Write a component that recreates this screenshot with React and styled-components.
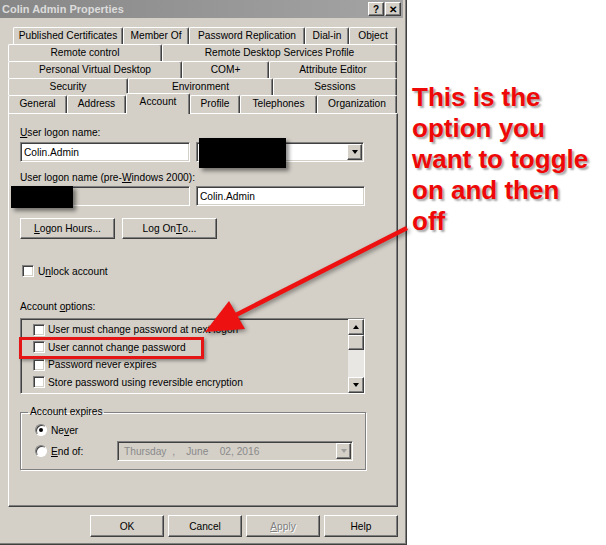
import React from "react";
import styled, { createGlobalStyle, css } from "styled-components";

const face = `"Liberation Sans", Arial, sans-serif`;

const GlobalStyle = createGlobalStyle`
  *, *::before, *::after { box-sizing: border-box; }
  html, body { margin: 0; padding: 0; background: #fff; }
  body { font-family: ${face}; }
`;

const raised = css`
  border: 1px solid;
  border-color: #fff #404040 #404040 #fff;
  box-shadow: inset -1px -1px #808080;
  background: #d4d0c8;
`;

const sunken = css`
  border: 1px solid;
  border-color: #808080 #fff #fff #808080;
  box-shadow: inset 1px 1px #404040, inset -1px -1px #d4d0c8;
`;

const tabs = [
  { indent: 5, h: 17, items: [["Published Certificates", 110], ["Member Of", 66], ["Password Replication", 116], ["Dial-in", 44], ["Object", 48]] },
  { indent: 0, h: 17, items: [["Remote control", 154], ["Remote Desktop Services Profile", 235]] },
  { indent: 0, h: 17, items: [["Personal Virtual Desktop", 174], ["COM+", 87], ["Attribute Editor", 128]] },
  { indent: 0, h: 17, items: [["Security", 120], ["Environment", 145], ["Sessions", 124]] },
  { indent: 0, h: 18, items: [["General", 59], ["Address", 59], ["Account", 64, true], ["Profile", 50], ["Telephones", 77], ["Organization", 80]] },
];

const options = [
  "User must change password at next logon",
  "User cannot change password",
  "Password never expires",
  "Store password using reversible encryption",
];

export default function App() {
  return (
    <Page>
      <GlobalStyle />
      <Dialog>
        <TitleBar>
          <Title>Colin Admin Properties</Title>
          <CaptionButtons>
            <CaptionButton>?</CaptionButton>
            <CaptionButton>✕</CaptionButton>
          </CaptionButtons>
        </TitleBar>

        <TabStrip>
          {tabs.map((row, i) => (
            <TabRow key={i} $indent={row.indent} $h={row.h}>
              {row.items.map(([name, w, active]) => (
                <Tab key={name} $w={w} $active={active}>{name}</Tab>
              ))}
            </TabRow>
          ))}
        </TabStrip>

        <Panel>
          <Label><U>U</U>ser logon name:</Label>
          <FieldRow $mt={3}>
            <Field $w={170}>Colin.Admin</Field>
            <Field $w={168} $combo>
              <Redact $x={2} $y={-5} $w={87} $h={30} />
              <DropButton><Arrow /></DropButton>
            </Field>
          </FieldRow>

          <Label $mt={10}>User logon name (pre-<U>W</U>indows 2000):</Label>
          <FieldRow $mt={2}>
            <Field $w={170} $disabled>
              <Redact $x={-10} $y={-1} $w={62} $h={22} />
            </Field>
            <Field $w={169}>Colin.Admin</Field>
          </FieldRow>

          <ButtonRow>
            <PushButton><U>L</U>ogon Hours...</PushButton>
            <PushButton>Log On <U>T</U>o...</PushButton>
          </ButtonRow>

          <CheckRow>
            <Check />
            <span>U<U>n</U>lock account</span>
          </CheckRow>

          <Label $mt={23}>Account <U>o</U>ptions:</Label>
          <ListBox>
            <ListItems>
              {options.map((o, i) => (
                <ListItem key={o}>
                  <Check />
                  <span>{o}</span>
                  {i === 1 && <Highlight />}
                </ListItem>
              ))}
            </ListItems>
            <ScrollBar>
              <ScrollButton><Arrow $up /></ScrollButton>
              <Thumb />
              <Track />
              <ScrollButton><Arrow /></ScrollButton>
            </ScrollBar>
          </ListBox>

          <Group>
            <Legend>Account expires</Legend>
            <RadioRow $mt={5}>
              <Radio $checked />
              <span>Ne<U>v</U>er</span>
            </RadioRow>
            <RadioRow $mt={4}>
              <Radio />
              <RadioLabel><U>E</U>nd of:</RadioLabel>
              <DatePicker>
                <span>{"Thursday  ,    June    02, 2016"}</span>
                <DropButton $disabled><Arrow $disabled /></DropButton>
              </DatePicker>
            </RadioRow>
          </Group>
        </Panel>

        <ButtonBar>
          <DlgButton>OK</DlgButton>
          <DlgButton>Cancel</DlgButton>
          <DlgButton $disabled><U>A</U>pply</DlgButton>
          <DlgButton>Help</DlgButton>
        </ButtonBar>
      </Dialog>

      <Note>
        This is the<br />
        option you<br />
        want to toggle<br />
        on and then<br />
        off
      </Note>

      <Pointer viewBox="0 0 606 545" width="606" height="545">
        <line x1="407" y1="228" x2="232" y2="317" stroke="#ee1111" strokeWidth="4.5" />
        <polygon points="205,332 245,329 229,301" fill="#ee1111" />
      </Pointer>
    </Page>
  );
}

const Page = styled.div`
  position: relative;
  width: 606px;
  height: 545px;
  display: flex;
  overflow: hidden;
  background: #fff;
`;

const Dialog = styled.div`
  width: 407px;
  height: 545px;
  display: flex;
  flex-direction: column;
  background: #d4d0c8;
  border-right: 1px solid #404040;
  border-bottom: 1px solid #404040;
  box-shadow: inset -1px -1px #808080;
  font: 10.2px ${face};
  color: #000;
`;

const TitleBar = styled.div`
  height: 18px;
  margin-right: 3px;
  padding: 0 2px 0 2px;
  display: flex;
  align-items: center;
  justify-content: space-between;
  background: linear-gradient(90deg, #878787, #a4a4a4);
`;

const Title = styled.div`
  font: bold 11px ${face};
  color: #dcdcdc;
`;

const CaptionButtons = styled.div`
  display: flex;
  gap: 1px;
`;

const CaptionButton = styled.div`
  ${raised};
  width: 16px;
  height: 14px;
  display: flex;
  align-items: center;
  justify-content: center;
  font: bold 10px ${face};
  color: #000;
`;

const TabStrip = styled.div`
  display: flex;
  flex-direction: column;
  padding: 9px 0 0 8px;
`;

const TabRow = styled.div`
  display: flex;
  align-items: flex-end;
  height: ${(p) => p.$h}px;
  padding-left: ${(p) => p.$indent}px;
`;

const Tab = styled.div`
  width: ${(p) => p.$w}px;
  height: 100%;
  border-top: 1px solid #fff;
  border-left: 1px solid #fff;
  border-right: 1px solid #404040;
  box-shadow: inset -1px 0 #808080;
  border-radius: 2px 2px 0 0;
  text-align: center;
  line-height: 15px;
  white-space: nowrap;
  overflow: hidden;
  background: #d4d0c8;
  ${(p) =>
    p.$active &&
    css`
      position: relative;
      z-index: 2;
      height: calc(100% + 3px);
      margin-top: -2px;
      margin-bottom: -1px;
      line-height: 16px;
    `}
`;

const Panel = styled.div`
  width: 390px;
  height: 394px;
  margin-left: 8px;
  display: flex;
  flex-direction: column;
  padding: 13px 0 0 11px;
  border-top: 1px solid #fff;
  border-left: 1px solid #fff;
  border-right: 1px solid #404040;
  border-bottom: 1px solid #404040;
  box-shadow: inset -1px -1px #808080;
`;

const U = styled.span`
  text-decoration: underline;
`;

const Label = styled.div`
  height: 12px;
  line-height: 12px;
  margin-top: ${(p) => p.$mt || 0}px;
  white-space: nowrap;
`;

const FieldRow = styled.div`
  display: flex;
  gap: 6px;
  margin-top: ${(p) => p.$mt || 0}px;
`;

const Field = styled.div`
  ${sunken};
  position: relative;
  width: ${(p) => p.$w}px;
  height: 20px;
  display: flex;
  align-items: center;
  padding: ${(p) => (p.$combo ? "0 1px 0 3px" : "0 3px")};
  background: ${(p) => (p.$disabled ? "#d4d0c8" : "#fff")};
`;

const Redact = styled.div`
  position: absolute;
  left: ${(p) => p.$x}px;
  top: ${(p) => p.$y}px;
  width: ${(p) => p.$w}px;
  height: ${(p) => p.$h}px;
  background: #000;
  box-shadow: 3px 3px 4px rgba(0, 0, 0, 0.45);
`;

const DropButton = styled.div`
  ${raised};
  width: 15px;
  height: 16px;
  margin-left: auto;
  display: flex;
  align-items: center;
  justify-content: center;
`;

const Arrow = styled.span`
  width: 0;
  height: 0;
  border-left: 3.5px solid transparent;
  border-right: 3.5px solid transparent;
  ${(p) =>
    p.$up
      ? css`border-bottom: 4px solid #000;`
      : css`border-top: 4px solid ${p.$disabled ? "#a0a0a0" : "#000"};`}
`;

const ButtonRow = styled.div`
  display: flex;
  gap: 7px;
  margin-top: 12px;
`;

const PushButton = styled.div`
  ${raised};
  width: 95px;
  height: 21px;
  display: flex;
  align-items: center;
  justify-content: center;
`;

const CheckRow = styled.div`
  display: flex;
  align-items: center;
  gap: 4px;
  height: 14px;
  margin: 25px 0 0 2px;
`;

const Check = styled.span`
  ${sunken};
  width: 12px;
  height: 12px;
  flex: none;
  background: #fff;
`;

const ListBox = styled.div`
  ${sunken};
  width: 345px;
  height: 76px;
  margin-top: 5px;
  display: flex;
  background: #d4d0c8;
`;

const ListItems = styled.div`
  flex: 1;
  padding: 2px 0 0 12px;
`;

const ListItem = styled.div`
  position: relative;
  height: 17.5px;
  display: flex;
  align-items: center;
  gap: 3px;
  white-space: nowrap;
`;

const Highlight = styled.span`
  position: absolute;
  left: -14px;
  top: -2px;
  width: 185px;
  height: 22px;
  border: 3px solid #e51515;
  box-shadow: 2px 2px 3px rgba(0, 0, 0, 0.35);
  pointer-events: none;
`;

const ScrollBar = styled.div`
  width: 16px;
  display: flex;
  flex-direction: column;
`;

const ScrollButton = styled.div`
  ${raised};
  height: 16px;
  display: flex;
  align-items: center;
  justify-content: center;
`;

const Thumb = styled.div`
  ${raised};
  height: 15px;
`;

const Track = styled.div`
  flex: 1;
  background: #e9e7e3;
`;

const Group = styled.fieldset`
  width: 346px;
  margin: 12px 0 0 0;
  padding: 0 0 8px 14px;
  border: 1px solid #808080;
  box-shadow: 1px 1px 0 #fff, inset 1px 1px 0 #fff;
  min-inline-size: 0;
`;

const Legend = styled.legend`
  margin-left: -7px;
  padding: 0 2px;
  line-height: 12px;
`;

const RadioRow = styled.div`
  display: flex;
  align-items: center;
  gap: 4px;
  margin-top: ${(p) => p.$mt}px;
  min-height: 14px;
`;

const Radio = styled.span`
  width: 12px;
  height: 12px;
  flex: none;
  border-radius: 50%;
  border: 1px solid;
  border-color: #808080 #fff #fff #808080;
  box-shadow: inset 1px 1px #404040;
  background: #fff;
  display: flex;
  align-items: center;
  justify-content: center;
  &::after {
    content: "";
    width: 4px;
    height: 4px;
    border-radius: 50%;
    background: ${(p) => (p.$checked ? "#000" : "transparent")};
  }
`;

const RadioLabel = styled.span`
  width: 62px;
`;

const DatePicker = styled.div`
  ${sunken};
  width: 236px;
  height: 20px;
  display: flex;
  align-items: center;
  padding: 0 1px 0 6px;
  background: #d4d0c8;
  color: #8a8a8a;
  white-space: pre;
`;

const ButtonBar = styled.div`
  display: flex;
  justify-content: flex-end;
  gap: 4px;
  padding-right: 8px;
  margin-top: 8px;
`;

const DlgButton = styled.div`
  ${raised};
  width: 74px;
  height: 22px;
  display: flex;
  align-items: center;
  justify-content: center;
  color: ${(p) => (p.$disabled ? "#808080" : "#000")};
  text-shadow: ${(p) => (p.$disabled ? "1px 1px #fff" : "none")};
`;

const Note = styled.div`
  padding: 82px 0 0 5px;
  font: bold 26px/31px ${face};
  color: #ee0808;
  text-shadow: 2px 2px 2px rgba(0, 0, 0, 0.35);
  white-space: nowrap;
`;

const Pointer = styled.svg`
  position: absolute;
  left: 0;
  top: 0;
  pointer-events: none;
  filter: drop-shadow(2px 2px 2px rgba(0, 0, 0, 0.4));
`;
